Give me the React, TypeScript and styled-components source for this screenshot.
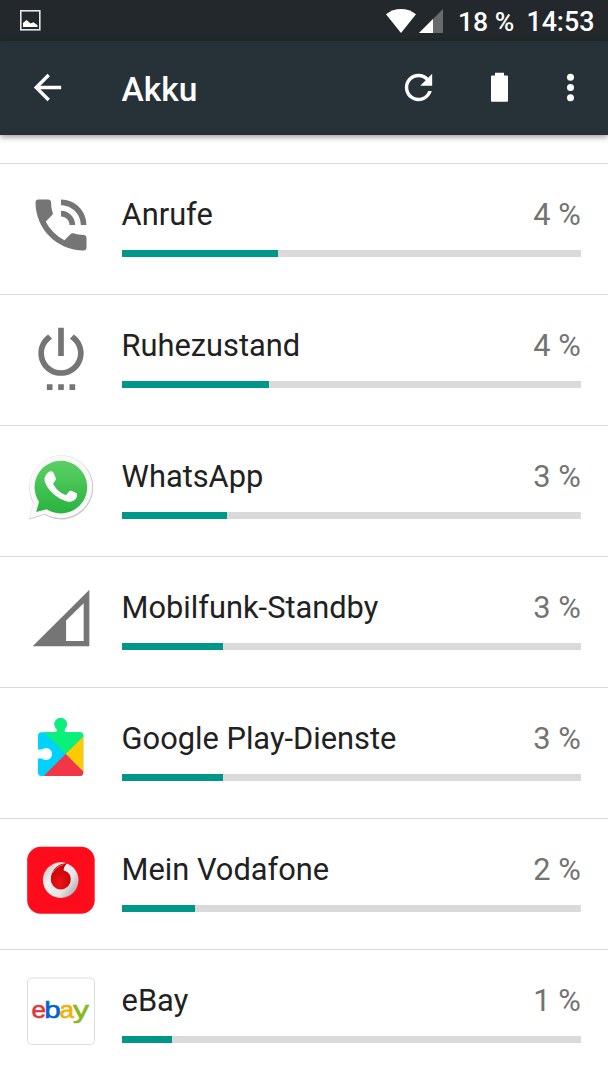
import React from "react";
import styled, { createGlobalStyle } from "styled-components";

const GlobalStyle = createGlobalStyle`
  * { box-sizing: border-box; }
  body { margin: 0; background: #fff; font-family: Roboto, sans-serif; overflow: hidden; }
  svg { display: block; flex: none; }
`;

const Screen = styled.div`
  width: 608px;
  height: 1080px;
  display: flex;
  flex-direction: column;
  overflow: hidden;
  background: #fff;
`;

const StatusBar = styled.header`
  height: 41px;
  flex: none;
  display: flex;
  align-items: center;
  padding: 0 13.600px 0 20px;
  background: #22282b;
  color: #fff;
  font-size: 26.8px;
  font-weight: 500;
`;

const StatusIcons = styled.div`
  display: flex;
  gap: 3px;
  margin-left: auto;
  margin-right: 14.500px;
`;

const StatusText = styled.span`
  padding-top: 3px;
  line-height: 38px;
`;

const BatteryLevel = styled(StatusText)`
  margin-right: 12px;
  font-size: 26.6px;
`;

const Toolbar = styled.nav`
  height: 94px;
  flex: none;
  display: flex;
  align-items: center;
  padding: 0 17px 1px 27px;
  background: #273238;
  color: #fff;
  box-shadow: 0 2px 6px rgba(0, 0, 0, 0.4);
  z-index: 1;
`;

const Title = styled.h1`
  margin: 4px auto 0 53.600px;
  font-size: 33.5px;
  font-weight: 500;
  line-height: 40px;
`;

const Actions = styled.div`
  display: flex;
  align-items: center;
`;

const Action = styled.div<{ $gap?: number }>`
  margin-right: ${({ $gap = 0 }) => $gap}px;
`;

const List = styled.ul`
  list-style: none;
  margin: 0;
  padding: 28px 0 0;
`;

const Row = styled.li`
  height: 131px;
  display: flex;
  align-items: flex-start;
  gap: 26.6px;
  padding: 27px 27.3px 0 27px;
  border-top: 1px solid #dadada;
`;

const Details = styled.div`
  flex: 1;
  padding-top: 6px;
`;

const Labels = styled.div`
  display: flex;
  justify-content: space-between;
  font-size: 30.8px;
  line-height: 36px;
`;

const Name = styled.span`
  color: #212121;
`;

const Percent = styled.span`
  color: #737373;
`;

const Track = styled.div`
  height: 7px;
  margin-top: 16.600px;
  background: #dadada;
`;

const Fill = styled.div`
  height: 100%;
  background: #009688;
`;

const GREY = "#757575";

const PictureIcon = () => (
  <svg width="21" height="21" viewBox="0 0 21 21">
    <rect x="0.8" y="0.8" width="19" height="19" fill="none" stroke="#e6e6e6" strokeWidth="1.6" />
    <path d="M3 17v-4l3.5-3 4 3.6 3-1.4 4 3V17z" fill="#fff" />
  </svg>
);

const WifiIcon = () => (
  <svg width="30" height="24" viewBox="0 0 30 24">
    <path d="M15 24 0 5.2C4.4 1.8 9.500 0 15 0s10.600 1.800 15 5.200z" fill="#fff" />
  </svg>
);

const StatusSignalIcon = () => (
  <svg width="24" height="24" viewBox="0 0 24 24">
    <path d="M0 24 24 0v24z" fill="#676b6d" />
    <path d="M0 24 14 10v14z" fill="#fff" />
  </svg>
);

const BackIcon = () => (
  <svg width="41" height="41" viewBox="0 0 24 24" fill="#fff">
    <path d="M20 11H7.830l5.590-5.590L12 4l-8 8 8 8 1.410-1.410L7.830 13H20v-2z" />
  </svg>
);

const RefreshIcon = () => (
  <svg width="41" height="41" viewBox="0 0 24 24" fill="#fff">
    <path d="M17.650 6.350C16.200 4.900 14.210 4 12 4c-4.420 0-7.990 3.580-7.990 8s3.570 8 7.990 8c3.730 0 6.840-2.550 7.730-6h-2.080c-.82 2.330-3.040 4-5.650 4-3.310 0-6-2.690-6-6s2.690-6 6-6c1.660 0 3.140.69 4.220 1.780L13 11h7V4l-2.350 2.350z" />
  </svg>
);

const BatteryIcon = () => (
  <svg width="41" height="41" viewBox="0 0 41 41" fill="#fff">
    <path d="M16 5.700h9v2.800h3q1 0 1 1v24.300q0 1-1 1H13q-1 0-1-1V9.500q0-1 1-1h3z" />
  </svg>
);

const MoreIcon = () => (
  <svg width="41" height="41" viewBox="0 0 24 24" fill="#fff">
    <circle cx="12" cy="6" r="2.050" />
    <circle cx="12" cy="12" r="2.050" />
    <circle cx="12" cy="18" r="2.050" />
  </svg>
);

const PhoneIcon = () => (
  <svg width="68" height="68" viewBox="0 0 24 24" fill={GREY}>
    <path d="M20 15.500c-1.250 0-2.450-.2-3.570-.57-.35-.11-.74-.03-1.020.24l-2.200 2.200c-2.830-1.440-5.150-3.750-6.590-6.590l2.200-2.210c.28-.26.36-.65.25-1C8.700 6.450 8.500 5.250 8.500 4c0-.55-.45-1-1-1H4c-.55 0-1 .45-1 1 0 9.390 7.610 17 17 17 .55 0 1-.45 1-1v-3.500c0-.55-.45-1-1-1zM19 12h2c0-4.970-4.030-9-9-9v2c3.870 0 7 3.130 7 7zm-4 0h2c0-2.760-2.240-5-5-5v2c1.660 0 3 1.340 3 3z" />
  </svg>
);

const PowerIcon = () => (
  <svg width="68" height="68" viewBox="0 0 24 24" fill={GREY}>
    <path d="M7 24h2v-2H7v2zm4 0h2v-2h-2v2zm2-22h-2v10h2V2zm3.560 2.440l-1.450 1.450C16.840 6.940 18 8.830 18 11c0 3.310-2.690 6-6 6s-6-2.690-6-6c0-2.170 1.160-4.060 2.880-5.120L7.440 4.440C5.360 5.880 4 8.280 4 11c0 4.420 3.580 8 8 8s8-3.580 8-8c0-2.720-1.360-5.120-3.440-6.560zM15 24h2v-2h-2v2z" />
  </svg>
);

const WhatsAppIcon = () => (
  <svg width="68" height="68" viewBox="0 0 68 68">
    <defs>
      <linearGradient id="wa-green" x1="0" y1="0" x2="0" y2="1">
        <stop offset="0" stopColor="#5bd066" />
        <stop offset="1" stopColor="#29b33f" />
      </linearGradient>
    </defs>
    <g transform="translate(-0.6 0)">
      <path d="M2.300 66.700 6.900 50A32 32 0 1 1 18.300 61.800z" fill="#c9c9c9" />
      <path d="M2.700 65.700 7.300 49.300A31.300 31.300 0 1 1 18.700 60.800z" fill="#f9f9f9" />
      <path d="M9.800 58.900 12.600 48.700A26.300 26.300 0 1 1 20.200 56.200z" fill="url(#wa-green)" />
      <path d="M22.200 19.100c1-1.200 3.600-1.200 4.400-.2 1 1.500 2.200 4.400 2.800 6.200.5 1.600-.7 3.100-2.200 4.700-.5.600-.4 1.200 0 1.900 2.700 4.800 6.300 7.900 11.400 10.100.8.300 1.300.2 1.900-.5 1-1.200 2.100-3.100 3-3.500 1.300-.5 6.100 2 6.900 2.600.8.700 0 4.300-1.300 5.900-1.800 2.100-5.400 3-8.400 2.200C30 45.700 19.900 35.600 18.200 27.800c-.6-3.500 1.100-6.300 4-8.700z" fill="#fff" />
    </g>
  </svg>
);

const SignalIcon = () => (
  <svg width="68" height="68" viewBox="0 0 24 24" fill={GREY}>
    <path fillRule="evenodd" d="M2 22 22 2v20zM13.800 20.100H20V6.800l-6.200 6.100z" />
  </svg>
);

const PlayServicesIcon = () => (
  <svg width="68" height="68" viewBox="0 0 68 68">
    <defs>
      <clipPath id="puzzle">
        <path d="M14.500 17.300H28.300Q30 17.300 29.900 15.800V14.200A6.300 6.300 0 1 1 37.500 14.200V15.800Q37.400 17.300 39.100 17.300H52.800a3.500 3.500 0 0 1 3.500 3.500V57.500A3.500 3.500 0 0 1 52.800 61H14.500A3.500 3.500 0 0 1 11 57.500V43.400H15A6 6 0 1 0 15 34.600H11V20.800a3.500 3.500 0 0 1 3.500-3.500z" />
      </clipPath>
    </defs>
    <g clipPath="url(#puzzle)">
      <path d="M0 0h68v68H0z" fill="#00d2ff" />
      <path d="M0 0H77.700L38.700 39z" fill="#0af078" />
      <path d="M77.700 0V78L38.700 39z" fill="#ffca00" />
      <path d="M38.700 39 67.700 68H9.700z" fill="#f23648" />
    </g>
  </svg>
);

const VodafoneIcon = () => (
  <svg width="68" height="68" viewBox="0 0 68 68">
    <defs>
      <linearGradient id="vf-silver" x1="0.1" y1="0.2" x2="0.9" y2="0.8">
        <stop offset="0" stopColor="#d0d0d0" />
        <stop offset="0.25" stopColor="#f2f2f2" />
        <stop offset="0.7" stopColor="#e6e6e6" />
        <stop offset="1" stopColor="#b4b4b4" />
      </linearGradient>
      <radialGradient id="vf-red" cx="0.45" cy="0.75" r="0.7">
        <stop offset="0" stopColor="#ee1515" />
        <stop offset="1" stopColor="#c0000a" />
      </radialGradient>
    </defs>
    <rect x="0.200" y="0.700" width="67.500" height="67" rx="13.500" fill="#ff0c1c" />
    <circle cx="33.700" cy="34.100" r="17.800" fill="url(#vf-silver)" />
    <path d="M40.500 17.400C34 16.500 23.800 22 23.800 33.500A10 10 0 1 0 43.800 33.500C43.800 28.300 41 25.600 36.700 24.400 36.500 21.500 38 19 40.500 17.400z" fill="url(#vf-red)" />
    <path d="M25.500 27C28 22.500 32 19.800 36.500 18.700" fill="none" stroke="#fff" strokeOpacity="0.500" strokeWidth="0.800" />
  </svg>
);

const EbayIcon = () => (
  <svg width="68" height="68" viewBox="0 0 68 68">
    <rect x="0.500" y="1" width="67" height="66.500" rx="4" fill="#fff" stroke="#dedede" />
    <g fontFamily="Liberation Sans, sans-serif" fontSize="24.500" strokeWidth="0.600">
      <text x="4.600" y="40.800" textLength="14.500" lengthAdjust="spacingAndGlyphs" fill="#e53238" stroke="#e53238">e</text>
      <text x="17.300" y="40.800" textLength="16.500" lengthAdjust="spacingAndGlyphs" fill="#0064d2" stroke="#0064d2">b</text>
      <text x="32.600" y="40.800" textLength="14.500" lengthAdjust="spacingAndGlyphs" fill="#f5af02" stroke="#f5af02">a</text>
      <text x="46" y="40.800" textLength="16" lengthAdjust="spacingAndGlyphs" fill="#86b817" stroke="#86b817">y</text>
    </g>
  </svg>
);

// `bar` is the filled part of the 459px track.
const consumers = [
  { name: "Anrufe", percent: 4, bar: 156.4, Icon: PhoneIcon },
  { name: "Ruhezustand", percent: 4, bar: 147, Icon: PowerIcon },
  { name: "WhatsApp", percent: 3, bar: 105.8, Icon: WhatsAppIcon },
  { name: "Mobilfunk-Standby", percent: 3, bar: 101, Icon: SignalIcon },
  { name: "Google Play-Dienste", percent: 3, bar: 101, Icon: PlayServicesIcon },
  { name: "Mein Vodafone", percent: 2, bar: 73.8, Icon: VodafoneIcon },
  { name: "eBay", percent: 1, bar: 50.5, Icon: EbayIcon },
];

export default function App() {
  return (
    <Screen>
      <GlobalStyle />
      <StatusBar>
        <PictureIcon />
        <StatusIcons>
          <WifiIcon />
          <StatusSignalIcon />
        </StatusIcons>
        <BatteryLevel>18 %</BatteryLevel>
        <StatusText>14:53</StatusText>
      </StatusBar>
      <Toolbar>
        <BackIcon />
        <Title>Akku</Title>
        <Actions>
          <Action $gap={40}>
            <RefreshIcon />
          </Action>
          <Action $gap={30}>
            <BatteryIcon />
          </Action>
          <Action>
            <MoreIcon />
          </Action>
        </Actions>
      </Toolbar>
      <List>
        {consumers.map(({ name, percent, bar, Icon }) => (
          <Row key={name}>
            <Icon />
            <Details>
              <Labels>
                <Name>{name}</Name>
                <Percent>{percent} %</Percent>
              </Labels>
              <Track>
                <Fill style={{ width: `${(bar / 459) * 100}%` }} />
              </Track>
            </Details>
          </Row>
        ))}
      </List>
    </Screen>
  );
}
